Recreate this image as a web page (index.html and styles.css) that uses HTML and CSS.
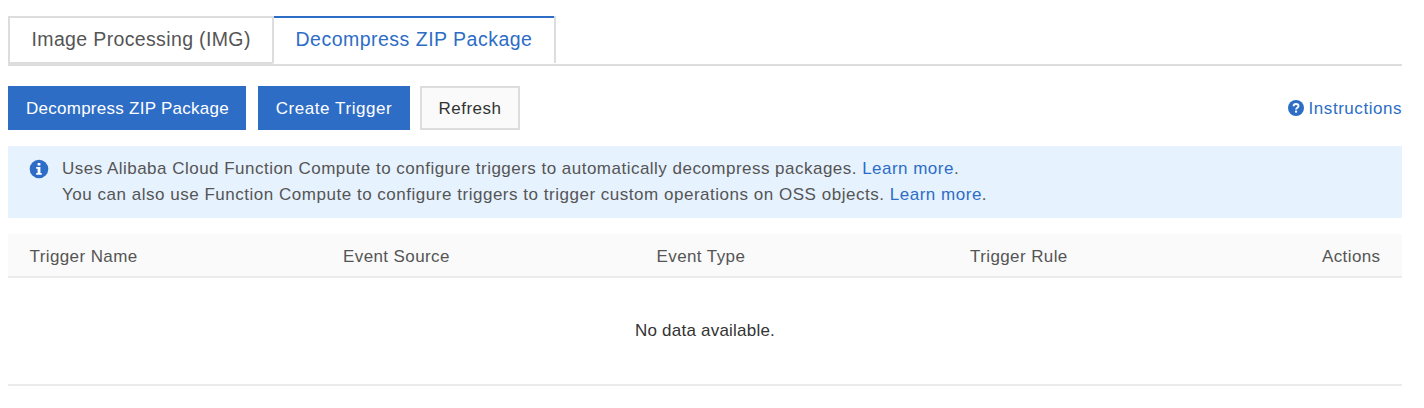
FILE: index.html
```html
<!DOCTYPE html>
<html lang="en">
<head>
<meta charset="utf-8">
<title>Decompress ZIP Package</title>
<link rel="stylesheet" href="styles.css">
</head>
<body>
<nav class="tabs">
  <a class="tab tab-image">Image Processing (IMG)</a>
  <a class="tab tab-active">Decompress ZIP Package</a>
</nav>
<div class="toolbar">
  <button class="btn btn-primary btn-zip">Decompress ZIP Package</button>
  <button class="btn btn-primary btn-create">Create Trigger</button>
  <button class="btn btn-refresh">Refresh</button>
  <a class="instructions">
    <svg width="16" height="16" viewBox="0 0 16 16"><circle cx="8" cy="8" r="8" fill="#2d6dc6"/><path d="M5.6 6.3C5.6 4.7 6.6 4 8 4s2.5.8 2.5 2.1c0 1.7-2.4 1.7-2.4 3.3" fill="none" stroke="#fff" stroke-width="1.9"/><rect x="7" y="10.6" width="2.1" height="2" fill="#fff"/></svg>
    <span>Instructions</span>
  </a>
</div>
<section class="notice">
  <svg width="20" height="20" viewBox="0 0 20 20"><circle cx="10" cy="10" r="9.3" fill="#2d6dc6"/><path d="M8.6 4h2.8v2.6H8.6zM7.2 7.9h4.2v6h1.3v1.8H7.2v-1.8h1.4V9.7H7.2z" fill="#fff"/></svg>
  <div>
    <p class="line-one">Uses Alibaba Cloud Function Compute to configure triggers to automatically decompress packages. <a>Learn more</a>.</p>
    <p class="line-two">You can also use Function Compute to configure triggers to trigger custom operations on OSS objects. <a>Learn more</a>.</p>
  </div>
</section>
<div class="table">
  <div class="table-head">
    <span>Trigger Name</span><span>Event Source</span><span>Event Type</span><span>Trigger Rule</span><span>Actions</span>
  </div>
  <div class="empty">No data available.</div>
</div>
</body>
</html>
```
FILE: styles.css
```css
* { box-sizing: border-box; }
body { margin: 0; padding: 16px 22px 0 8px; background: #fff; color: #555; font: 17px/26px "Liberation Sans", Arial, sans-serif; letter-spacing: .4px; }
.tabs { display: flex; height: 50px; border-bottom: 2px solid #ddd; }
.tab { height: 48px; border: 2px solid #ddd; font-size: 19.5px; line-height: 43px; padding-left: 21.5px; }
.tab-image { width: 266px; letter-spacing: .36px; border-radius: 0 0 2px 0; }
.tab-active { width: 282px; height: 47px; padding-top: 2px; border-width: 0 2px 0 0; box-shadow: inset 0 2px #2d6dc6; color: #2d6dc6; letter-spacing: .49px; }
.toolbar { display: flex; align-items: center; height: 44px; margin-top: 20px; }
.btn { height: 44px; border: 2px solid #2d6dc6; padding: 2px 0 0; font: 17px/38px "Liberation Sans", Arial, sans-serif; }
.btn-primary { background: #2d6dc6; color: #fff; }
.btn-zip { width: 238px; margin-right: 12px; padding-left: 1px; letter-spacing: .27px; }
.btn-create { width: 152px; margin-right: 10px; letter-spacing: .56px; }
.btn-refresh { width: 100px; background: #fafafa; border-color: #ddd; color: #333; letter-spacing: .5px; }
.instructions { display: flex; align-items: center; gap: 5px; margin-left: auto; color: #2d6dc6; letter-spacing: .54px; }
.instructions span { padding-top: 2px; }
.notice { display: flex; height: 72px; margin-top: 16px; padding: 10px 21px; gap: 13px; background: #e6f2fe; }
.notice svg { margin-top: 3px; flex: none; }
.notice p { margin: 0; white-space: nowrap; }
.notice a { color: #2d6dc6; }
.line-one { letter-spacing: .48px; }
.line-two { letter-spacing: .52px; }
.table { margin-top: 16px; border-bottom: 2px solid #ebebeb; }
.table-head { display: grid; grid-template-columns: 313.5px 313.5px 313.5px 1fr auto; height: 44px; padding: 1px 21.5px 0; border-bottom: 2px solid #ebebeb; background: #fafafa; line-height: 44px; }
.empty { height: 106px; line-height: 106px; text-align: center; color: #333; letter-spacing: .22px; }
```
